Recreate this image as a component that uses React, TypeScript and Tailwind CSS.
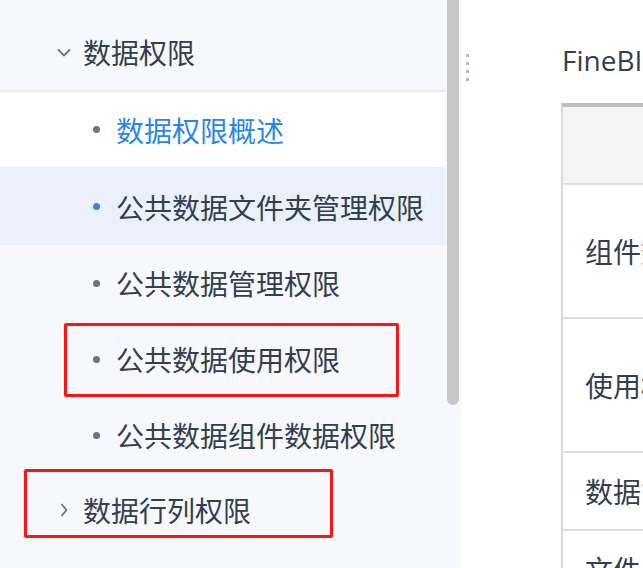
import { ReactNode } from "react";

const cjk = { fontFamily: '"Noto Sans CJK SC", "Noto Sans", sans-serif' };

function ChevronDown() {
  return (
    <svg width="14" height="9" viewBox="0 0 14 9" fill="none">
      <path d="M1 1.5 L7 7.5 L13 1.5" stroke="#6b7385" strokeWidth="1.8" />
    </svg>
  );
}

function ChevronRight() {
  return (
    <svg width="8" height="14" viewBox="0 0 8 14" fill="none">
      <path d="M1.5 1 L6.5 7 L1.5 13" stroke="#6b7385" strokeWidth="1.8" />
    </svg>
  );
}

function Group({ open, title, h }: { open: boolean; title: string; h: string }) {
  return (
    <div className={`flex flex-row items-center shrink-0 ${h} pl-[57px] text-[#333e4f] text-[28px]`}>
      <div className="w-[26px] flex items-center">
        {open ? <ChevronDown /> : <span className="pl-[3px] flex"><ChevronRight /></span>}
      </div>
      <span>{title}</span>
    </div>
  );
}

function Item({ label, active, current }: { label: string; active?: boolean; current?: boolean }) {
  const bg = current ? "bg-white h-[75px]" : active ? "bg-[#eaf1fc] h-[77px]" : "h-[76px]";
  return (
    <div className={`flex flex-row items-center shrink-0 pl-[93px] text-[28px] ${bg}`}>
      <div className={`w-[7px] h-[7px] rounded-full ${active ? "bg-[#2f86ea]" : "bg-[#6b7385]"}`}></div>
      <span className={`ml-[16px] ${current ? "text-[#2a85e8]" : "text-[#333e4f]"}`}>{label}</span>
    </div>
  );
}

function Row({ h, children }: { h: string; children?: ReactNode }) {
  return (
    <div className={`${h} shrink-0 flex items-center pl-[22px] border-b-2 border-[#dedede] text-[28px] text-[#333e4f] whitespace-nowrap overflow-hidden`}>
      {children}
    </div>
  );
}

export default function App() {
  return (
    <div className="flex flex-row w-[643px] h-[568px] overflow-hidden bg-white" style={cjk}>
      <div className="w-[461px] shrink-0 flex flex-row bg-[#f7f8fc] relative">
        <div className="w-[445px] shrink-0 flex flex-col pt-[14px]">
          <Group open title="数据权限" h="h-[76px]" />
          <div className="h-[2px] shrink-0 bg-[#ebecef]"></div>
          <Item label="数据权限概述" current />
          <div className="h-px shrink-0 bg-[#ececec]"></div>
          <Item label="公共数据文件夹管理权限" active />
          <Item label="公共数据管理权限" />
          <Item label="公共数据使用权限" />
          <Item label="公共数据组件数据权限" />
          <Group open={false} title="数据行列权限" h="h-[74px]" />
        </div>
        <div className="w-[16px] pl-[2px]">
          <div className="w-[12px] h-[405px] bg-[#c6c6c6] rounded-b-[6px]"></div>
        </div>

        <div className="absolute left-[64px] top-[323px] w-[335px] h-[74px] border-[3px] border-[#ff1414] rounded-[2px]"></div>
        <div className="absolute left-[24px] top-[469px] w-[309px] h-[69px] border-[3px] border-[#ff1414] rounded-[2px]"></div>
      </div>

      <div className="flex-1 flex flex-row min-w-0">
        <div className="w-[100px] shrink-0 pl-[5px] pt-[54px] flex flex-col gap-[5px]">
          <div className="w-[3px] h-[3px] bg-[#b4bcc8]"></div>
          <div className="w-[3px] h-[3px] bg-[#b4bcc8]"></div>
          <div className="w-[3px] h-[3px] bg-[#b4bcc8]"></div>
          <div className="w-[3px] h-[3px] bg-[#b4bcc8]"></div>
        </div>
        <div className="flex-1 flex flex-col min-w-0">
          <div className="h-[103px] shrink-0 pt-[40px] pl-px text-[28px] leading-[40px] text-[#333e4f] whitespace-nowrap" style={{ fontFamily: '"Open Sans", "Noto Sans CJK SC", sans-serif' }}>
            FineBI
          </div>
          <div className="border-t-4 border-[#bdbdbd] border-l-2 border-l-[#dcdcdc] flex flex-col shrink-0">
            <div className="h-[78px] shrink-0 bg-[#f5f5f5] border-b-2 border-[#dedede]"></div>
            <Row h="h-[134px]">组件数据权限</Row>
            <Row h="h-[134px]">使用权限</Row>
            <Row h="h-[78px]">数据管理权限</Row>
            <Row h="h-[78px]">文件夹管理权限</Row>
          </div>
        </div>
      </div>
    </div>
  );
}
